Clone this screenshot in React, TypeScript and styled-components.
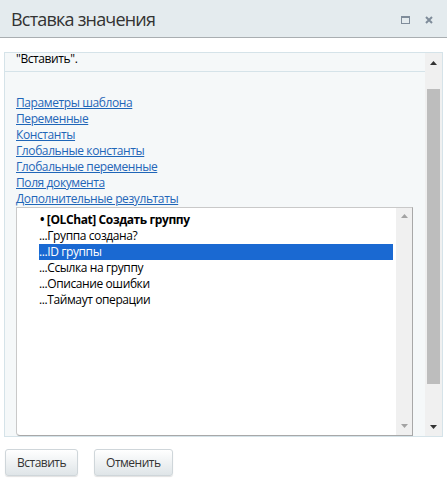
import React from "react";
import styled, { createGlobalStyle } from "styled-components";

const Global = createGlobalStyle`
  html, body { margin: 0; padding: 0; background: #fff; }
  body { font-family: "Open Sans", "Noto Sans", sans-serif; }
  * { box-sizing: border-box; }
`;

const Dialog = styled.div`
  width: 447px;
  height: 481px;
  background: #fff;
  display: flex;
  flex-direction: column;
`;

const Header = styled.div`
  height: 38px;
  background: #e4ebee;
  border-bottom: 1px solid #a9aeb1;
  display: flex;
  align-items: center;
  padding: 0 13px 0 11px;
`;

const Title = styled.div`
  flex: 1;
  font-size: 18px;
  color: #333;
  letter-spacing: -0.8px;
`;

const HeaderIcons = styled.div`
  display: flex;
  align-items: center;
  gap: 14px;
  padding-top: 2px;
`;

const IconBtn = styled.span`
  display: flex;
  width: 10px;
  height: 10px;
  align-items: center;
  justify-content: center;
`;

const Body = styled.div`
  padding: 14px 4px 0 4px;
`;

const Panel = styled.div`
  height: 385px;
  border: 1px solid #d5e3e9;
  background: #f5f8f9;
  display: flex;
`;

const Content = styled.div`
  flex: 1;
  display: flex;
  flex-direction: column;
  min-width: 0;
`;

const Intro = styled.div`
  height: 19px;
  border-bottom: 1px solid #d5e3e9;
  overflow: hidden;
  padding-left: 11px;
  font-size: 12px;
  letter-spacing: -0.4px;
  color: #000;
`;

const IntroText = styled.p`
  margin: -2px 0 0 0;
  line-height: 16px;
`;

const Links = styled.div`
  padding: 23px 0 0 11px;
  display: flex;
  flex-direction: column;
`;

const LinkItem = styled.a`
  font-size: 12px;
  line-height: 16px;
  letter-spacing: -0.4px;
  color: #1f66b8;
  text-decoration: underline;
  cursor: pointer;
  width: fit-content;
`;

const ListWrap = styled.div`
  margin-left: 11px;
  margin-right: 12px;
  height: 229px;
  background: #fff;
  border: 1px solid #a8a8a8;
  border-top-color: #c9c9c9;
  border-left-color: #c9c9c9;
  border-radius: 0 0 0 4px;
  display: flex;
  overflow: hidden;
`;

const ListItems = styled.div`
  flex: 1;
  padding: 4px 3px 0 22px;
  display: flex;
  flex-direction: column;
`;

const GroupLabel = styled.div`
  font-size: 12px;
  line-height: 16px;
  font-weight: 700;
  letter-spacing: -0.4px;
  color: #000;
  padding-left: 1px;
  white-space: nowrap;
`;

const Option = styled.div<{ $selected?: boolean }>`
  font-size: 12px;
  line-height: 16px;
  height: 16px;
  letter-spacing: -0.4px;
  color: ${(p) => (p.$selected ? "#fff" : "#000")};
  background: ${(p) => (p.$selected ? "#1a69d2" : "transparent")};
  white-space: nowrap;
`;

const ScrollBar = styled.div<{ $light?: boolean }>`
  width: ${(p) => (p.$light ? "16px" : "17px")};
  background: #f0f0f0;
  display: flex;
  flex-direction: column;
  align-items: center;
  flex-shrink: 0;
`;

const Arrow = styled.div<{ $h: number }>`
  height: ${(p) => p.$h}px;
  width: 100%;
  display: flex;
  align-items: center;
  justify-content: center;
  flex-shrink: 0;
`;

const Track = styled.div`
  flex: 1;
  width: 100%;
  display: flex;
  flex-direction: column;
  padding: 0 2px;
`;

const Thumb = styled.div`
  background: #bdbdbd;
  height: 295px;
  margin-top: 17px;
`;

const Footer = styled.div`
  display: flex;
  gap: 16px;
  padding: 12px 0 0 5px;
`;

const Button = styled.button`
  height: 27px;
  padding: 0 11px;
  border: 1px solid #cfd6da;
  border-radius: 3px;
  background: linear-gradient(#ffffff, #dfe5e8);
  box-shadow: 0 1px 1px rgba(0, 0, 0, 0.12);
  font-family: "Open Sans", "Noto Sans", sans-serif;
  font-size: 12px;
  letter-spacing: -0.5px;
  color: #333;
  cursor: pointer;
`;

const Tri = ({ up, color }: { up?: boolean; color: string }) => (
  <svg width="7" height="4" viewBox="0 0 7 4">
    <polygon points={up ? "0,4 7,4 3.5,0" : "0,0 7,0 3.5,4"} fill={color} />
  </svg>
);

const links = [
  "Параметры шаблона",
  "Переменные",
  "Константы",
  "Глобальные константы",
  "Глобальные переменные",
  "Поля документа",
  "Дополнительные результаты",
];

const options = [
  "...Группа создана?",
  "...ID группы",
  "...Ссылка на группу",
  "...Описание ошибки",
  "...Таймаут операции",
];

export default function App() {
  return (
    <>
      <Global />
      <Dialog>
        <Header>
          <Title>Вставка значения</Title>
          <HeaderIcons>
            <IconBtn>
              <svg width="9" height="8" viewBox="0 0 9 8">
                <rect x="0.5" y="0.5" width="8" height="7" fill="none" stroke="#7f8c9a" />
                <line x1="0" y1="1" x2="9" y2="1" stroke="#7f8c9a" strokeWidth="2" />
              </svg>
            </IconBtn>
            <IconBtn>
              <svg width="8" height="8" viewBox="0 0 8 8">
                <path d="M1 1 L7 7 M7 1 L1 7" stroke="#7f8c9a" strokeWidth="2" />
              </svg>
            </IconBtn>
          </HeaderIcons>
        </Header>
        <Body>
          <Panel>
            <Content>
              <Intro>
                <IntroText>"Вставить".</IntroText>
              </Intro>
              <Links>
                {links.map((l) => (
                  <LinkItem key={l}>{l}</LinkItem>
                ))}
              </Links>
              <ListWrap>
                <ListItems>
                  <GroupLabel>• [OLChat] Создать группу</GroupLabel>
                  {options.map((o, i) => (
                    <Option key={o} $selected={i === 1}>
                      {o}
                    </Option>
                  ))}
                </ListItems>
                <ScrollBar $light>
                  <Arrow $h={16}>
                    <Tri up color="#a3a3a3" />
                  </Arrow>
                  <Track />
                  <Arrow $h={18}>
                    <Tri color="#a3a3a3" />
                  </Arrow>
                </ScrollBar>
              </ListWrap>
            </Content>
            <ScrollBar>
              <Arrow $h={19}>
                <Tri up color="#333" />
              </Arrow>
              <Track>
                <Thumb />
              </Track>
              <Arrow $h={19}>
                <Tri color="#333" />
              </Arrow>
            </ScrollBar>
          </Panel>
        </Body>
        <Footer>
          <Button>Вставить</Button>
          <Button>Отменить</Button>
        </Footer>
      </Dialog>
    </>
  );
}
